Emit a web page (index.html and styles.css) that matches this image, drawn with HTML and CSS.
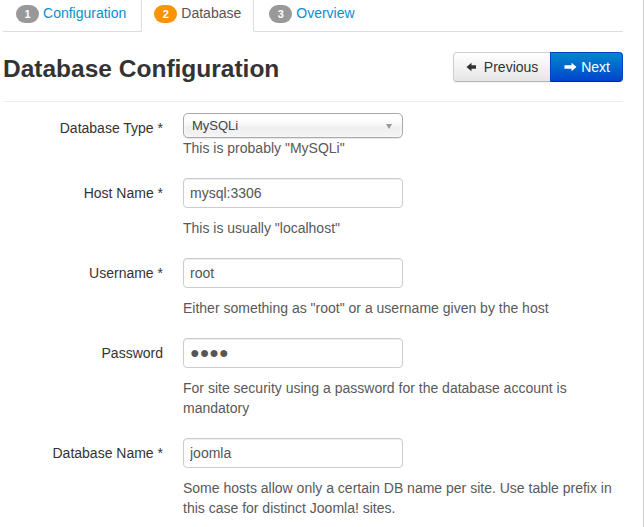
FILE: index.html
```html
<!DOCTYPE html>
<html>
<head>
<meta charset="utf-8">
<link rel="stylesheet" href="styles.css">
</head>
<body>
<div class="page">
  <div class="main">
    <ul class="tabs">
      <li><a class="tab"><span class="badge">1</span> Configuration</a></li>
      <li><a class="tab active"><span class="badge badge-warning">2</span> Database</a></li>
      <li><a class="tab"><span class="badge">3</span> Overview</a></li>
    </ul>
    <div class="header">
      <h3 class="title">Database Configuration</h3>
      <div class="btn-group">
        <a class="btn btn-default"><svg class="icon" width="14" height="14" viewBox="0 0 14 14"><path d="M0.5 7 L5.5 2.8 L5.5 5.3 L10 5.3 L10 8.7 L5.5 8.7 L5.5 11.2 Z" fill="#333"/></svg> Previous</a>
        <a class="btn btn-primary"><svg class="icon" width="14" height="14" viewBox="0 0 14 14"><path d="M13.5 7 L8.5 2.8 L8.5 5.3 L1.5 5.3 L1.5 8.7 L8.5 8.7 L8.5 11.2 Z" fill="#fff"/></svg> Next</a>
      </div>
    </div>
    <form class="form">
      <div class="group">
        <label class="label">Database Type *</label>
        <div class="controls">
          <div class="chosen"><span>MySQLi</span><b class="caret"></b></div>
          <p class="help help-tight">This is probably "MySQLi"</p>
        </div>
      </div>
      <div class="group">
        <label class="label">Host Name *</label>
        <div class="controls">
          <input class="input" type="text" value="mysql:3306">
          <p class="help">This is usually "localhost"</p>
        </div>
      </div>
      <div class="group">
        <label class="label">Username *</label>
        <div class="controls">
          <input class="input" type="text" value="root">
          <p class="help">Either something as "root" or a username given by the host</p>
        </div>
      </div>
      <div class="group">
        <label class="label">Password</label>
        <div class="controls">
          <input class="input input-secret" type="text" value="●●●●">
          <p class="help">For site security using a password for the database account is mandatory</p>
        </div>
      </div>
      <div class="group">
        <label class="label">Database Name *</label>
        <div class="controls">
          <input class="input" type="text" value="joomla">
          <p class="help">Some hosts allow only a certain DB name per site. Use table prefix in this case for distinct Joomla! sites.</p>
        </div>
      </div>
    </form>
  </div>
</div>
</body>
</html>
```

FILE: styles.css
```css
html, body {
  margin: 0;
  padding: 0;
  background: #fff;
  overflow: hidden;
}
body {
  font-family: "Liberation Sans", Arial, sans-serif;
  font-size: 14px;
  line-height: 20px;
  color: #333;
}
.page {
  width: 643px;
  min-height: 560px;
  border-right: 1px solid #cfcfcf;
}
.main {
  width: 620px;
  margin: -6px 0 0 3px;
}
.tabs {
  display: flex;
  list-style: none;
  margin: 0;
  padding: 0;
  border-bottom: 1px solid #ddd;
}
.tabs li {
  margin-bottom: -1px;
}
.tab {
  display: block;
  padding: 8px 12px;
  line-height: 20px;
  margin-right: 2px;
  border: 1px solid transparent;
  border-radius: 4px 4px 0 0;
  color: #0d8dd0;
  text-decoration: none;
}
.tab.active {
  color: #555;
  background: #fff;
  border-color: #ddd #ddd transparent;
}
.badge {
  display: inline-block;
  padding: 2px 8.5px;
  font-size: 11px;
  font-weight: bold;
  line-height: 14px;
  color: #fff;
  background: #999;
  border-radius: 9px;
  vertical-align: baseline;
}
.badge-warning {
  background: #f89406;
}
.header {
  display: flex;
  justify-content: space-between;
  align-items: flex-start;
  padding: 20px 0 19px;
  border-bottom: 1px solid #eee;
}
.title {
  margin: 2px 0 -2px;
  font-size: 24.5px;
  line-height: 30px;
  font-weight: bold;
  color: #333;
}
.btn-group {
  display: flex;
}
.btn {
  display: inline-block;
  padding: 4px 12px;
  font-size: 14px;
  line-height: 20px;
  border: 1px solid;
  text-decoration: none;
}
.btn-default {
  color: #333;
  background: linear-gradient(#ffffff, #e6e6e6);
  border-color: #d0d0d0 #d0d0d0 #b3b3b3;
  border-radius: 4px 0 0 4px;
  box-shadow: inset 0 1px 0 rgba(255,255,255,.2), 0 1px 2px rgba(0,0,0,.05);
}
.btn-primary {
  color: #fff;
  background: linear-gradient(#0088cc, #0044cc);
  border-color: #0044cc #0044cc #002a80;
  border-radius: 0 4px 4px 0;
  margin-left: -1px;
}
.icon {
  vertical-align: -2px;
}
.form {
  margin: 11px 0 0;
}
.group {
  display: flex;
  margin-bottom: 20px;
}
.label {
  width: 160px;
  flex: none;
  padding-top: 5px;
  text-align: right;
  font-size: 14px;
  color: #333;
}
.controls {
  margin-left: 20px;
  flex: 1;
  min-width: 0;
}
.chosen {
  position: relative;
  box-sizing: border-box;
  width: 220px;
  height: 25px;
  padding-left: 8px;
  line-height: 23px;
  font-size: 13px;
  color: #444;
  border: 1px solid #aaa;
  border-radius: 5px;
  background: linear-gradient(#ffffff 20%, #f6f6f6 50%, #eeeeee 52%, #f4f4f4 100%);
  box-shadow: inset 0 0 3px #fff, 0 1px 1px rgba(0,0,0,.1);
}
.caret {
  position: absolute;
  right: 10px;
  top: 10px;
  width: 0;
  height: 0;
  border-left: 3.5px solid transparent;
  border-right: 3.5px solid transparent;
  border-top: 5px solid #999;
}
.input {
  display: block;
  box-sizing: border-box;
  width: 220px;
  height: 30px;
  margin: 0;
  padding: 4px 6px;
  font-family: "Liberation Sans", Arial, sans-serif;
  font-size: 14px;
  line-height: 20px;
  color: #555;
  background: #fff;
  border: 1px solid #ccc;
  border-radius: 4px;
  box-shadow: inset 0 1px 1px rgba(0,0,0,.075);
  outline: none;
}
.input-secret {
  font-size: 16px;
  letter-spacing: 0;
}
.help {
  margin: 10px 0 0;
  color: #595959;
}
.help-tight {
  margin-top: 0;
}
```
